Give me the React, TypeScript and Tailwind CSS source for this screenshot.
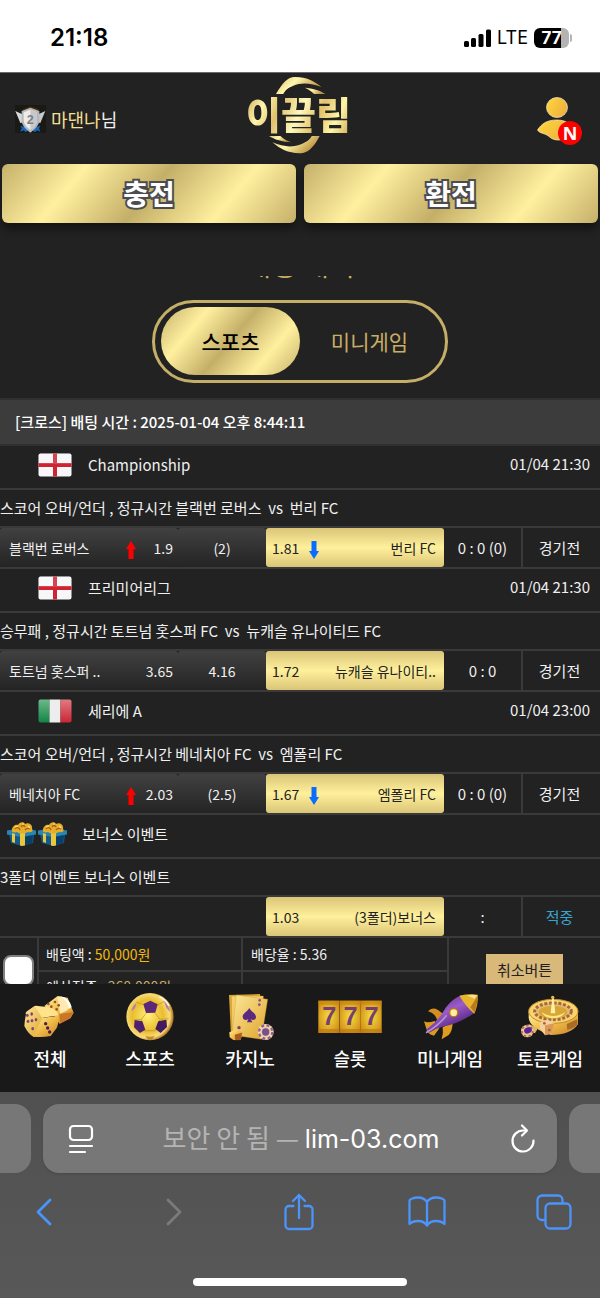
import type { ReactNode } from "react";

const GOLD =
  "bg-[linear-gradient(130deg,#c5b06a_0%,#fff09f_25%,#c4af68_50%,#fff09f_75%,#c5b06a_100%)]";

function EnglandFlag() {
  return (
    <svg className="h-6 w-[34px]" viewBox="0 0 34 24" role="img" aria-label="England">
      <rect x="0.5" y="0.5" width="33" height="23" rx="2" fill="#f7f7f9" />
      <path d="M15 0.5h4v23h-4z" fill="#cf2333" />
      <path d="M0.5 10h33v4h-33z" fill="#cf2333" />
      <path d="M0.5 2.5a2 2 0 0 1 2-2h29a2 2 0 0 1 2 2V11H0.5z" fill="#fff" opacity="0.15" />
    </svg>
  );
}

function ItalyFlag() {
  return (
    <svg className="h-6 w-[34px]" viewBox="0 0 34 24" role="img" aria-label="Italy">
      <defs>
        <linearGradient id="itg" x1="0" y1="0" x2="0" y2="1">
          <stop offset="0" stopColor="#6bb98a" />
          <stop offset="1" stopColor="#128544" />
        </linearGradient>
        <linearGradient id="itr" x1="0" y1="0" x2="0" y2="1">
          <stop offset="0" stopColor="#e07a80" />
          <stop offset="1" stopColor="#cb2535" />
        </linearGradient>
      </defs>
      <path d="M11.500.5H2.500a2 2 0 0 0-2 2v19a2 2 0 0 0 2 2h9z" fill="url(#itg)" />
      <path d="M11.500.5h11v23h-11z" fill="#ededed" />
      <path d="M22.500.5h9a2 2 0 0 1 2 2v19a2 2 0 0 1-2 2h-9z" fill="url(#itr)" />
    </svg>
  );
}

function Gift() {
  return (
    <svg className="h-6 w-[31px]" viewBox="0 0 31 24" aria-hidden="true">
      <path d="M3 12h25l-1 9-11 3-11-3z" fill="#15598a" />
      <path d="M16 13h11l-1 8-10 2.500z" fill="#0c3f68" />
      <path d="M1 8.500 16 6l14 2.500v4L16 15 1 12.500z" fill="#2686b4" />
      <path d="M14 10h5v13.500l-3 .5-2-.5zM6 11l3 1v9l-3-1z" fill="#ecc63b" />
      <path d="M6 8c0-4 4-6 6-5 1-3 6-4 7-1 3-2 8 0 7 5 2 2-1 4-4 3-4 2-8 2-11 0-3 1-6 0-5-2z" fill="#e8ac2c" />
      <path d="M9 7c1-2 4-2 5 1M15 5c1-2 3-2 4 0M19 8c1-2 4-2 5-1" stroke="#9a650f" strokeWidth="1.300" fill="none" />
      <path d="M9 5l3-1M16 2l2 0M22 4l2 2" stroke="#ffe27b" strokeWidth="1.200" fill="none" />
    </svg>
  );
}

function RankBadge() {
  return (
    <svg className="h-7 w-[31px]" viewBox="0 0 93 84" aria-hidden="true">
      <rect width="93" height="84" fill="#191915" />
      <path d="M22 14 46 4l26 9-8 8H30z" fill="#4c2c0a" />
      <path d="M16 62l12 4 8-6 6 14-10 8-6-6-10 4 4-10zM76 62l-12 4-8-6-6 14 10 8 6-6 10 4-4-10z" fill="#1768bd" />
      <path d="M1 18 22 28 26 52 16 54z" fill="#d5d7d9" />
      <path d="M91 18 70 28 66 52 76 54z" fill="#c5c7c9" />
      <path d="M20 18 46 8l27 10v30C70 64 58 74 46 83 34 74 22 64 20 48z" fill="#b7b8ba" />
      <path d="M26 22 46 14l20 8v25c-3 14-12 21-20 27-9-6-18-14-20-27z" fill="#ececec" />
      <path d="M46 14l20 8v25c-3 14-12 21-20 27z" fill="#c7c8ca" />
      <text x="46" y="57" textAnchor="middle" fontFamily="Liberation Sans" fontWeight="700" fontSize="38" fill="#7e8083">2</text>
    </svg>
  );
}

function Logo() {
  return (
    <div className="relative grid h-[78px] w-[106px] place-items-center">
      <svg className="absolute inset-0 h-full w-full" viewBox="0 0 318 234" aria-hidden="true">
        <defs>
          <linearGradient id="lg" x1="0" y1="0" x2="1" y2="0.400">
            <stop offset="0" stopColor="#dcbd62" />
            <stop offset="0.450" stopColor="#fff7b0" />
            <stop offset="1" stopColor="#b9903b" />
          </linearGradient>
        </defs>
        <path d="M90 54C108 22 126 4 142 3c34-2 62 10 84 30-30-12-60-14-84-4-18 7-25 15-30 25z" fill="url(#lg)" />
        <path d="M176 35c26 2 48 9 62 19h-34c-8-9-17-14-28-19z" fill="url(#lg)" />
        <path d="M221 180c-14 28-32 48-50 51-36 4-67-10-92-32 34 15 64 16 88 5 18-8 25-14 30-24z" fill="url(#lg)" />
        <path d="M136 199c-26-1-52-9-67-19h34c9 9 20 15 33 19z" fill="url(#lg)" />
      </svg>
      <span className="relative bg-[linear-gradient(115deg,#c9a450_0%,#fff6ae_18%,#dfc06c_32%,#fff8bc_50%,#e2c16a_66%,#fff5a8_82%,#c9a24c_100%)] bg-clip-text pb-1 text-[38px] leading-[40px] font-black whitespace-nowrap text-transparent">
        이끌림
      </span>
    </div>
  );
}

function Person() {
  return (
    <svg className="h-11 w-[38px]" viewBox="0 0 38 44" aria-hidden="true">
      <defs>
        <linearGradient id="pg" x1="0" y1="0" x2="1" y2="0.500">
          <stop offset="0" stopColor="#ffd83a" />
          <stop offset="1" stopColor="#efb040" />
        </linearGradient>
      </defs>
      <ellipse cx="20" cy="10.500" rx="10.500" ry="10" fill="url(#pg)" stroke="#f8edc8" strokeWidth="0.700" />
      <path d="M.5 33c4-6 9-10 19.500-10s17 6 18 14c0 3-10 6-17 6-5 0-7-2-11-5-4-2-8-2-9.500-5z" fill="url(#pg)" stroke="#f8edc8" strokeWidth="0.700" />
    </svg>
  );
}

function StatusBar() {
  return (
    <div className="flex h-[72px] shrink-0 items-center justify-between bg-white pt-1 pr-7 pl-[50px] text-black">
      <span className="font-[Inter] text-2xl leading-8 font-semibold">21:18</span>
      <div className="flex items-center">
        <svg className="h-[18px] w-[27px]" viewBox="0 0 27 18" aria-hidden="true">
          <rect x="0" y="12" width="5" height="6" rx="1.500" />
          <rect x="7" y="9" width="5" height="9" rx="1.500" />
          <rect x="14.500" y="5" width="5" height="13" rx="1.500" />
          <rect x="22" y="0.500" width="5" height="17.500" rx="1.500" />
        </svg>
        <span className="ml-1.5 font-[Inter] text-lg leading-6">LTE</span>
        <div className="ml-1.5 flex h-5 w-[35px] items-center justify-center rounded-[6px] bg-[linear-gradient(90deg,#000_77%,#b3b3b3_77%)] font-[Inter] text-[17px] leading-5 font-bold text-white">
          77
        </div>
        <span className="ml-px h-2 w-0.5 rounded-r bg-[#b3b3b3]" />
      </div>
    </div>
  );
}

function Arrow({ down = false }: { down?: boolean }) {
  return (
    <svg className="mt-1 h-[18px] w-[10px] shrink-0" viewBox="0 0 10 18" aria-hidden="true">
      {down ? (
        <path d="M2.500 0h5v10H10l-5 8-5-8h2.500z" fill="#0a6cff" />
      ) : (
        <path d="M2.500 18h5V8H10L5 0 0 8h2.500z" fill="#ff0000" />
      )}
    </svg>
  );
}

type Bet = {
  icon: ReactNode;
  league: string;
  time?: string;
  desc: string;
  home?: string;
  homeOdds?: string;
  draw?: string;
  pickOdds: string;
  pick: string;
  moved?: boolean;
  score: string;
  state: string;
  won?: boolean;
};

const BETS: Bet[] = [
  { icon: <EnglandFlag />, league: "Championship", time: "01/04 21:30", desc: "스코어 오버/언더 , 정규시간 블랙번 로버스\u00a0 vs\u00a0 번리 FC", home: "블랙번 로버스", homeOdds: "1.9", draw: "(2)", pickOdds: "1.81", pick: "번리 FC", moved: true, score: "0 : 0 (0)", state: "경기전" },
  { icon: <EnglandFlag />, league: "프리미어리그", time: "01/04 21:30", desc: "승무패 , 정규시간 토트넘 홋스퍼 FC\u00a0 vs\u00a0 뉴캐슬 유나이티드 FC", home: "토트넘 홋스퍼 ..", homeOdds: "3.65", draw: "4.16", pickOdds: "1.72", pick: "뉴캐슬 유나이티..", score: "0 : 0", state: "경기전" },
  { icon: <ItalyFlag />, league: "세리에 A", time: "01/04 23:00", desc: "스코어 오버/언더 , 정규시간 베네치아 FC\u00a0 vs\u00a0 엠폴리 FC", home: "베네치아 FC", homeOdds: "2.03", draw: "(2.5)", pickOdds: "1.67", pick: "엠폴리 FC", moved: true, score: "0 : 0 (0)", state: "경기전" },
  { icon: null, league: "보너스 이벤트", desc: "3폴더 이벤트 보너스 이벤트", pickOdds: "1.03", pick: "(3폴더)보너스", score: ":", state: "적중", won: true },
];

function BetRows({ bet }: { bet: Bet }) {
  const dark = "flex h-[39px] items-center rounded-[3px] bg-linear-to-b from-[#414141] to-[#242424] text-sm";
  return (
    <>
      <tr>
        <td colSpan={5} className="h-11 border-b-2 border-[#3a3a3a] p-0 pb-1">
          <div className="flex items-center justify-between pr-2.5">
            {bet.icon ? (
              <div className="flex items-center gap-4 pl-[38px]">
                {bet.icon}
                <span>{bet.league}</span>
              </div>
            ) : (
              <div className="flex items-center pl-1.5">
                <Gift />
                <Gift />
                <span className="ml-3.5">{bet.league}</span>
              </div>
            )}
            <span className="pb-0.5">{bet.time}</span>
          </div>
        </td>
      </tr>
      <tr>
        <td colSpan={5} className="h-[38px] border-b-2 border-[#3a3a3a] p-0 whitespace-nowrap">
          {bet.desc}
        </td>
      </tr>
      <tr>
        <td className="h-[41px] border-b-2 border-[#3a3a3a] p-0">
          {bet.home && (
            <div className={`${dark} justify-between pr-[5px] pl-[9px]`}>
              <span className="whitespace-nowrap">{bet.home}</span>
              <div className="flex items-center">
                {bet.moved && <Arrow />}
                <span className="w-[37px] text-right">{bet.homeOdds}</span>
              </div>
            </div>
          )}
        </td>
        <td className="border-b-2 border-[#3a3a3a] p-0">
          {bet.draw && <div className={`${dark} justify-center`}>{bet.draw}</div>}
        </td>
        <td className="border-b-2 border-[#3a3a3a] p-0">
          <div className="flex h-[39px] items-center rounded-[3px] bg-[linear-gradient(180deg,#d9c577_0%,#fff09c_50%,#d9c577_100%)] pr-2 pl-1.5 text-sm text-[#222]">
            <span className="mr-2.5">{bet.pickOdds}</span>
            {bet.moved && <Arrow down />}
            <span className="ml-auto whitespace-nowrap">{bet.pick}</span>
          </div>
        </td>
        <td className="border-r-2 border-b-2 border-[#3a3a3a] p-0 text-center">{bet.score}</td>
        <td className={`border-b-2 border-[#3a3a3a] p-0 pr-1 text-center ${bet.won ? "text-[#38a5cc]" : ""}`}>
          {bet.state}
        </td>
      </tr>
    </>
  );
}

const GoldDefs = () => (
  <svg className="absolute h-0 w-0" aria-hidden="true">
    <defs>
      <linearGradient id="g1" x1="0" y1="0" x2="1" y2="1">
        <stop offset="0" stopColor="#fff0a0" />
        <stop offset="0.500" stopColor="#f0bc48" />
        <stop offset="1" stopColor="#c9822a" />
      </linearGradient>
      <radialGradient id="g2" cx="0.450" cy="0.480" r="0.550">
        <stop offset="0" stopColor="#fff07a" />
        <stop offset="0.600" stopColor="#e9bd2d" />
        <stop offset="0.850" stopColor="#f8dd7c" />
        <stop offset="1" stopColor="#a86a18" />
      </radialGradient>
      <linearGradient id="g3" x1="0" y1="0" x2="1" y2="1">
        <stop offset="0" stopColor="#fce79a" />
        <stop offset="1" stopColor="#e0a52b" />
      </linearGradient>
      <radialGradient id="g4" cx="0.500" cy="0.500" r="0.650">
        <stop offset="0" stopColor="#f2df41" />
        <stop offset="1" stopColor="#d08612" />
      </radialGradient>
      <linearGradient id="g5" x1="0" y1="0" x2="0.600" y2="1">
        <stop offset="0" stopColor="#5b2590" />
        <stop offset="0.500" stopColor="#9b5cc6" />
        <stop offset="1" stopColor="#451773" />
      </linearGradient>
    </defs>
  </svg>
);

function DiceArt() {
  const back = [[145, 72], [165, 66], [170, 88], [154, 80], [176, 76]];
  const left = [[95, 102], [84, 124], [96, 122], [108, 119], [98, 146], [82, 106]];
  const right = [[137, 131], [143, 144], [149, 156]];
  return (
    <>
      <path d="M133 78 172 49l31 4 18 45-10 17-33 16-20-33z" fill="url(#g1)" />
      <path d="M172 49c18 0 34 10 40 28l-10 14-22 10z" fill="#ffe9b0" />
      <path d="M180 49c18 2 30 14 35 32l-8 6c-3-16-12-30-27-38z" fill="#fffdf5" />
      <path d="M178 102 220 96l-8 18-32 17z" fill="#c97627" />
      <path d="M104 78q4-2 10 0l34 4q24 7 27 24l-50 8-48-12q-1-5 4-8z" fill="#ffe28a" />
      <path d="M104 78 79 98q-5 22-6 40 12 24 28 33l26-56z" fill="url(#g3)" />
      <path d="M126 114 176 107q0 24-6 37l-18 24q-24 5-53 2z" fill="url(#g1)" />
      {back.map(([x, y]) => <circle key={`${x}-${y}`} cx={x} cy={y} r="4" fill="#94522c" />)}
      {left.map(([x, y]) => <ellipse key={`${x}-${y}`} cx={x} cy={y} rx="4" ry="5" fill="#82407a" />)}
      {right.map(([x, y]) => <circle key={`${x}-${y}`} cx={x} cy={y} r="5" fill="#4f1c49" />)}
    </>
  );
}

function BallArt() {
  return (
    <>
      <circle cx="450" cy="110" r="71" fill="url(#g2)" />
      <path d="M438 100 424 118 430 140M466 100l14 18-9 22M424 118l-22 2M480 118l26-2M430 74 408 66M474 74l20-10M433 152l34 0" stroke="#c48e22" strokeWidth="2" fill="none" />
      <path d="M430 72 451 62 473 73 466 98 438 99z" fill="#5d2777" />
      <path d="M404 120 427 124 436 149 420 159 402 142z" fill="#4f206f" />
      <path d="M499 119 475 124 466 147 482 159 501 141z" fill="#43195f" />
      <path d="M394 94q4-18 15-25l-4 16zM492 62q14 12 18 34l-11-13z" fill="#b07eb2" />
      <path d="M436 168q14 5 28 0l-8 11h-12z" fill="#c08a30" />
      <path d="M478 50q20 8 29 28" stroke="#fff8d8" strokeWidth="5" fill="none" />
    </>
  );
}

function CardsArt() {
  return (
    <>
      <path d="M687 45 780 42 792 155 693 165z" fill="#dca935" />
      <path d="M694 48 790 48 786 168 697 160z" fill="#f6cf68" stroke="#ba852a" />
      <path d="M709 45 803 58 784 178 696 165z" fill="url(#g3)" stroke="#c69235" />
      <path d="M748 84c6 12 20 16 20 27 0 9-10 12-16 6l5 10h-16l4-10c-7 6-17 2-17-7 0-10 14-15 20-26z" fill="#5b2a7f" />
      <circle cx="779" cy="61" r="4" fill="#86508a" />
      <circle cx="778" cy="74" r="4" fill="#86508a" />
      <circle cx="717" cy="143" r="5" fill="#7b3d72" />
      <path d="M688 157 712 148 728 158 722 180 700 180 689 172z" fill="url(#g1)" />
      <path d="M704 164 726 158 722 180 706 181z" fill="#a85c22" />
      <circle cx="797" cy="156" r="24" fill="#f4d9a4" />
      <circle cx="797" cy="156" r="20" fill="none" stroke="#90609b" strokeWidth="7" strokeDasharray="9 7" />
      <circle cx="797" cy="156" r="14" fill="#e9c7a3" />
      <circle cx="797" cy="156" r="11" fill="#77508e" />
    </>
  );
}

function SlotsArt() {
  return (
    <>
      {[55, 119, 182].map((x) => (
        <g key={x}>
          <rect x={x} y="62" width="63" height="97" fill="url(#g4)" />
          <rect x={x} y="62" width="63" height="12" fill="#c6850f" opacity="0.600" />
          <rect x={x} y="147" width="63" height="12" fill="#b8760d" opacity="0.600" />
          <text x={x + 33} y="136" textAnchor="middle" fontFamily="Liberation Sans" fontWeight="700" fontSize="76" fill="#7a3d70">7</text>
        </g>
      ))}
    </>
  );
}

function RocketArt() {
  return (
    <>
      <path d="M384 94q12-14 30-4l16 12-18 20q-6-22-28-28z" fill="#d58e1c" />
      <path d="M372 124q10 6 32-1l14 22-16 22-12-4-8-8z" fill="#dd9b22" />
      <path d="M428 142 458 126q0 26-12 39l-21 13q6-18 3-36z" fill="#e09c20" />
      <path d="M380 148q34-24 58-66 20-26 46-36l40 52q-48 34-96 42-24 6-40 18z" fill="url(#g5)" />
      <path d="M378 158q34-18 62-52" stroke="#b594d0" strokeWidth="5" fill="none" />
      <path d="M478 47q28-6 55-3 2 30-10 57-24-20-45-54z" fill="#e7b62c" />
      <path d="M500 46q18-3 32 0l-8 10z" fill="#f9df91" />
      <path d="M524 98q9-24 8-50-8 15-21 34z" fill="#b87a1d" />
      <circle cx="461" cy="98" r="14" fill="#c27815" />
      <circle cx="461" cy="98" r="10" fill="#fff2a0" />
    </>
  );
}

function RouletteArt() {
  return (
    <>
      <path d="M686 95v18q2 30 66 52 60 0 82-32V95z" fill="url(#g1)" />
      <path d="M800 132 832 118v16q-12 12-30 16z" fill="#a96c25" />
      <ellipse cx="760" cy="94" rx="74" ry="36" fill="#f5d56c" stroke="#c48b2b" strokeWidth="3" />
      <ellipse cx="759" cy="94" rx="55" ry="25" fill="#e4bd75" stroke="#a8663f" strokeWidth="9" strokeDasharray="9 5" />
      <ellipse cx="759" cy="96" rx="43" ry="19" fill="#d9a636" />
      <path d="M724 96q36 24 72 0-10 18-36 19-26-1-36-19z" fill="#ffe87d" />
      <path d="M757 50h4l5 50h-14z" fill="#fff0a2" />
      <circle cx="758" cy="52" r="5" fill="#e9b944" />
      <path d="M719 126 744 119 763 130 755 160 735 166 720 146z" fill="#f5d19a" />
      <path d="M735 136 763 130 755 160 735 166z" fill="#dc9855" />
      <circle cx="733" cy="130" r="4" fill="#a25d54" />
      <circle cx="748" cy="150" r="4" fill="#a25d54" />
      <path d="M686 132 714 144 705 160 684 150z" fill="#e1b568" />
      <circle cx="682" cy="153" r="19" fill="#f0c483" />
      <circle cx="682" cy="153" r="16" fill="none" stroke="#a96a64" strokeWidth="5" strokeDasharray="7 7" />
      <ellipse cx="684" cy="151" rx="12" ry="9" fill="#5724a0" transform="rotate(-25 684 151)" />
    </>
  );
}

const NAV = [
  { label: "전체", view: "45 36 210 150", art: <DiceArt /> },
  { label: "스포츠", view: "345 36 210 150", art: <BallArt /> },
  { label: "카지노", view: "645 36 210 150", art: <CardsArt /> },
  { label: "슬롯", view: "45 36 210 150", art: <SlotsArt /> },
  { label: "미니게임", view: "345 36 210 150", art: <RocketArt /> },
  { label: "토큰게임", view: "645 36 210 150", art: <RouletteArt /> },
];

function BrowserBar() {
  const tool = "flex h-10 w-10 items-center justify-center text-[#4a94fb]";
  return (
    <footer className="flex shrink-0 flex-col items-center bg-linear-to-b from-[#505050] to-[#585858] pt-3 pb-3">
      <div className="flex h-[69px] w-full items-stretch gap-3">
        <div className="w-[31px] rounded-r-2xl bg-[#777]" />
        <div className="flex flex-1 items-center justify-between rounded-2xl bg-[#777] pr-5 pl-[18px] text-white shadow">
          <button aria-label="페이지 설정" className="flex h-10 w-10 items-center justify-center">
            <svg className="h-[30px] w-[26px]" viewBox="0 0 26 30" fill="none" stroke="currentColor" strokeWidth="2.200" strokeLinecap="round">
              <rect x="2" y="2" width="22" height="14" rx="3.500" />
              <path d="M2 22h22M2 28h15" />
            </svg>
          </button>
          <span className="pr-2 pb-0.5 text-[26px] leading-8 whitespace-nowrap text-[#b4b4b4]">
            보안 안 됨 — <span className="font-[Inter] text-[25px] text-white">lim-03.com</span>
          </span>
          <button aria-label="새로고침" className="flex h-10 w-7 items-center justify-center">
            <svg className="h-[30px] w-[26px]" viewBox="0 0 26 30" fill="none" stroke="currentColor" strokeWidth="2.200" strokeLinecap="round" strokeLinejoin="round">
              <path d="M23.500 16.500A10.500 10.500 0 1 1 13 6.500h3" />
              <path d="M12 1.500 17 6.500 12 11.500" />
            </svg>
          </button>
        </div>
        <div className="w-[31px] rounded-l-2xl bg-[#777]" />
      </div>
      <div className="mt-[19px] flex w-full items-center justify-between pr-[26px] pl-6">
        <button aria-label="뒤로" className={tool}>
          <svg className="h-7 w-4" viewBox="0 0 16 28" fill="none" stroke="currentColor" strokeWidth="2.800" strokeLinecap="round" strokeLinejoin="round"><path d="M14 2 2 14l12 12" /></svg>
        </button>
        <button aria-label="앞으로" className="flex h-10 w-10 items-center justify-center text-[#7b7b7b]">
          <svg className="ml-1 h-7 w-4" viewBox="0 0 16 28" fill="none" stroke="currentColor" strokeWidth="2.800" strokeLinecap="round" strokeLinejoin="round"><path d="M2 2l12 12L2 26" /></svg>
        </button>
        <button aria-label="공유" className={tool}>
          <svg className="h-[38px] w-[30px]" viewBox="0 0 30 38" fill="none" stroke="currentColor" strokeWidth="2.300" strokeLinecap="round" strokeLinejoin="round">
            <path d="M9.500 13H5a3.500 3.500 0 0 0-3.500 3.500v16A3.500 3.500 0 0 0 5 36h20a3.500 3.500 0 0 0 3.500-3.500v-16A3.500 3.500 0 0 0 25 13h-4.500M15 25V2M9 8l6-6 6 6" />
          </svg>
        </button>
        <button aria-label="책갈피" className={tool}>
          <svg className="h-8 w-[38px]" viewBox="0 0 38 32" fill="none" stroke="currentColor" strokeWidth="2.300" strokeLinecap="round" strokeLinejoin="round">
            <path d="M19 6c-2-3-5-4.500-9-4.500S1.500 3 1.500 5v23c2-2 5-3 8.500-3s7 1.500 9 4.500c2-3 5.500-4.500 9-4.500s6.500 1 8.500 3V5c0-2-4.500-3.500-8.500-3.500S21 3 19 6zM19 6v23" />
          </svg>
        </button>
        <button aria-label="탭" className={tool}>
          <svg className="h-9 w-9" viewBox="0 0 36 36" fill="none" stroke="currentColor" strokeWidth="2.300" strokeLinejoin="round">
            <path d="M9.500 26H6a4.500 4.500 0 0 1-4.500-4.500V6A4.500 4.500 0 0 1 6 1.500h16A4.500 4.500 0 0 1 26.500 6v3.500" />
            <rect x="9.500" y="9.500" width="25" height="25" rx="4.500" />
          </svg>
        </button>
      </div>
      <div className="mt-[46px] h-2 w-[214px] rounded-full bg-white" />
    </footer>
  );
}

export default function App() {
  const action = `${GOLD} h-[59px] rounded-md pb-0.5 text-[28px] leading-9 font-bold text-white shadow-[0_6px_10px_rgba(0,0,0,0.45)] [paint-order:stroke_fill] [-webkit-text-stroke:4px_#4c4c50]`;
  return (
    <div className="flex h-screen flex-col overflow-hidden bg-[#222] font-['Noto_Sans_CJK_KR',sans-serif] text-[15px] leading-[22px] text-[#f0f0f0]">
      <StatusBar />
      <header className="grid h-[92px] shrink-0 grid-cols-[1fr_auto_1fr] items-center border-t border-[#6b6b6e] pr-[18px] pb-2 pl-[15px]">
        <div className="flex items-center gap-[5px] pt-2 text-lg">
          <RankBadge />
          <span>
            <span className="text-[#f3df94]">마댄나</span>님
          </span>
        </div>
        <Logo />
        <button aria-label="내 정보" className="relative justify-self-end pt-2 pr-[7px]">
          <Person />
          <span className="absolute right-0 -bottom-1 flex h-6 w-6 items-center justify-center rounded-full bg-[#f00] font-['Open_Sans'] text-lg leading-6 font-bold text-white">
            N
          </span>
        </button>
      </header>

      <div className="mb-[53px] grid shrink-0 grid-cols-2 gap-2 px-0.5">
        <button className={action}>충전</button>
        <button className={action}>환전</button>
      </div>

      <main className="min-h-0 flex-1 overflow-hidden">
        <h1 className="-mt-[30px] text-center text-[28px] leading-9 text-[#c9ae66]">배팅 내역</h1>
        <div className="mx-auto mt-[18px] flex h-[83px] w-[296px] rounded-[42px] border-[3px] border-[#c5ae67] px-1.5 pt-1 pb-[5px] text-[21px]">
          <button className={`${GOLD} w-[139px] rounded-[34px] font-medium text-black`}>스포츠</button>
          <button className="flex-1 text-[#c9ae66]">미니게임</button>
        </div>

        <div className="mt-[15px] flex h-[48px] items-center border-y-2 border-[#303030] bg-[#3c3c3c] px-[15px] font-medium text-white">
          [크로스] 배팅 시간 : 2025-01-04 오후 8:44:11
        </div>
        <table className="w-full table-fixed border-separate border-spacing-0">
          <colgroup>
            <col className="w-[178px]" />
            <col className="w-[88px]" />
            <col className="w-[178px]" />
            <col className="w-[79px]" />
            <col className="w-[77px]" />
          </colgroup>
          <tbody>
            {BETS.map((bet) => (
              <BetRows key={bet.league} bet={bet} />
            ))}
          </tbody>
        </table>
        <div className="grid grid-cols-[39px_204px_206px_1fr] text-sm">
          <div className="flex h-16 items-center justify-center border-r-2 border-[#3a3a3a]">
            <input
              type="checkbox"
              aria-label="배팅 선택"
              className="h-[31px] w-[31px] appearance-none rounded-lg border-2 border-[#808084] bg-white"
            />
          </div>
          <div className="border-r-2 border-[#3a3a3a]">
            <div className="flex h-[34px] items-center border-b-2 border-[#3a3a3a] pl-[7px]">
              배팅액 :&nbsp;<span className="text-[#f2b90c]">50,000원</span>
            </div>
            <div className="flex h-7 items-center pl-[7px]">
              예상적중 :&nbsp;<span className="text-[#c9ae66]">268,000원</span>
            </div>
          </div>
          <div className="border-r-2 border-[#3a3a3a]">
            <div className="flex h-[34px] items-center border-b-2 border-[#3a3a3a] pl-2">배당율 : 5.36</div>
          </div>
          <div className="flex h-16 items-center justify-center">
            <button className="h-8 w-[77px] bg-[#d9b97a] text-[15px] text-[#222]">취소버튼</button>
          </div>
        </div>
      </main>

      <nav className="grid h-[108px] shrink-0 grid-cols-6 bg-[#191919] pt-2">
        <GoldDefs />
        {NAV.map((item) => (
          <a key={item.label} href={`#${item.label}`} className="flex flex-col items-center gap-1 text-lg leading-6 font-medium text-white">
            <svg className="h-[50px] w-[70px]" viewBox={item.view} aria-hidden="true">
              {item.art}
            </svg>
            {item.label}
          </a>
        ))}
      </nav>
      <BrowserBar />
    </div>
  );
}
